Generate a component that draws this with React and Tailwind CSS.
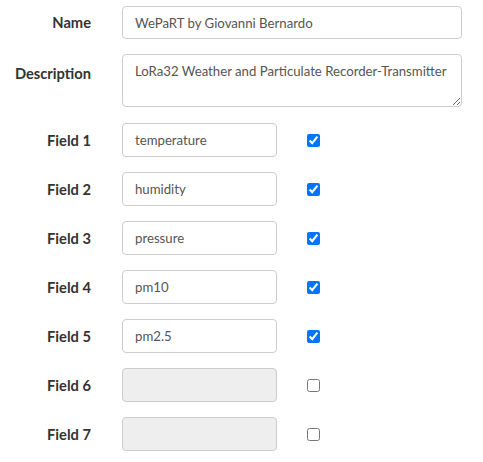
import React from "react";

const fields = [
  { label: "Field 1", value: "temperature", on: true },
  { label: "Field 2", value: "humidity", on: true },
  { label: "Field 3", value: "pressure", on: true },
  { label: "Field 4", value: "pm10", on: true },
  { label: "Field 5", value: "pm2.5", on: true },
  { label: "Field 6", value: "", on: false },
  { label: "Field 7", value: "", on: false },
];

export default function App() {
  return (
    <div
      className="w-[483px] h-[462px] bg-white overflow-hidden pt-[6px] pr-[21px]"
      style={{ fontFamily: "Lato, 'Open Sans', sans-serif" }}
    >
      <div className="flex flex-col gap-[15px]">
        {/* NAME */}
        <div className="flex items-center">
          <label className="w-[91px] shrink-0 text-right text-[14.7px] font-bold text-[#333]">
            Name
          </label>
          <input
            type="text"
            readOnly
            value="WePaRT by Giovanni Bernardo"
            className="ml-[31px] flex-1 h-[33px] px-[12px] border border-[#ccc] rounded-[4px] text-[13.2px] text-[#555] outline-none"
          />
        </div>

        {/* DESCRIPTION */}
        <div className="flex items-start">
          <label className="w-[91px] shrink-0 text-right text-[14.7px] font-bold text-[#333] pt-[8px]">
            Description
          </label>
          <textarea
            readOnly
            value="LoRa32 Weather and Particulate Recorder-Transmitter"
            className="ml-[31px] flex-1 h-[53px] px-[12px] py-[7px] border border-[#ccc] rounded-[4px] text-[13.2px] text-[#555] outline-none resize-y"
          />
        </div>

        {/* FIELDS */}
        <div className="flex flex-col gap-[15px] mt-[1px]">
          {fields.map((f) => (
            <div key={f.label} className="flex items-center">
              <label className="w-[91px] shrink-0 text-right text-[14.7px] font-bold text-[#333]">
                {f.label}
              </label>
              <input
                type="text"
                readOnly
                value={f.value}
                disabled={!f.on}
                className={
                  "ml-[31px] w-[155px] h-[34px] px-[12px] border border-[#ccc] rounded-[4px] text-[13.2px] text-[#555] outline-none " +
                  (f.on ? "bg-white" : "bg-[#eeeeee]")
                }
              />
              <input
                type="checkbox"
                readOnly
                checked={f.on}
                className="ml-[30px] w-[13px] h-[13px] m-0"
              />
            </div>
          ))}
        </div>
      </div>
    </div>
  );
}
